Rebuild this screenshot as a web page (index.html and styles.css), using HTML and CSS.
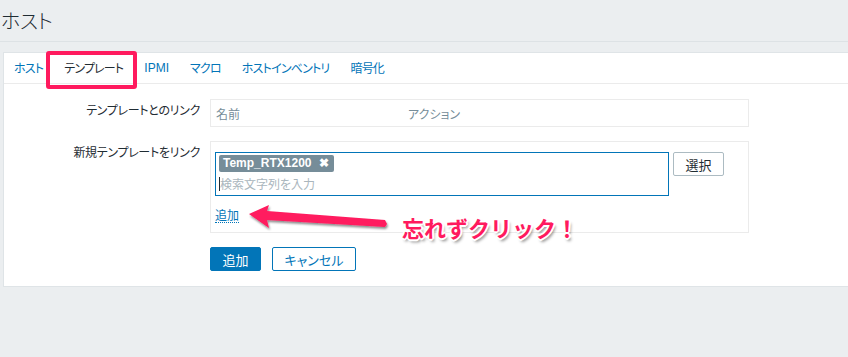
FILE: index.html
```html
<!DOCTYPE html>
<html lang="ja">
<head>
<meta charset="utf-8">
<link rel="stylesheet" href="styles.css">
</head>
<body>
<header class="page-header"><h1 class="title">ホスト</h1></header>
<main class="panel">
  <nav class="tabs">
    <a class="tab">ホスト</a>
    <a class="tab active">テンプレート</a>
    <a class="tab latin">IPMI</a>
    <a class="tab">マクロ</a>
    <a class="tab">ホストインベントリ</a>
    <a class="tab">暗号化</a>
  </nav>
  <div class="form">
    <div class="row">
      <div class="label">テンプレートとのリンク</div>
      <div class="linked">
        <span class="col-name">名前</span>
        <span class="col-action">アクション</span>
      </div>
    </div>
    <div class="row">
      <div class="label">新規テンプレートをリンク</div>
      <div class="newbox">
        <div class="select-line">
          <div class="multiselect">
            <span class="tag">Temp_RTX1200 <span class="tag-x">✖</span></span>
            <div class="search"><span class="caret"></span>検索文字列を入力</div>
          </div>
          <button class="btn-select">選択</button>
        </div>
        <a class="add-link">追加</a>
      </div>
    </div>
    <div class="row">
      <div class="label"></div>
      <div class="actions">
        <button class="btn-primary">追加</button>
        <button class="btn-secondary">キャンセル</button>
      </div>
    </div>
  </div>
</main>
<div class="highlight"></div>
<svg class="arrow" width="848" height="357" viewBox="0 0 848 357">
  <defs>
    <filter id="sh" x="-20%" y="-50%" width="140%" height="200%">
      <feDropShadow dx="1" dy="2" stdDeviation="1.2" flood-color="#000" flood-opacity="0.45"/>
    </filter>
  </defs>
  <polygon filter="url(#sh)" fill="#ff1a5e" points="249,214 269,205 267,211 385,220 387,224 385,227 267,220 269,228"/>
</svg>
<div class="note">忘れずクリック！</div>
</body>
</html>
```
FILE: styles.css
```css
* { box-sizing: border-box; }
html, body { margin: 0; padding: 0; }
body {
  width: 848px;
  height: 357px;
  overflow: hidden;
  background: #ebeef0;
  font-family: "Liberation Sans", "Noto Sans CJK JP", sans-serif;
  font-size: 12px;
  color: #1f2c33;
  position: relative;
  font-feature-settings: "palt";
}
.page-header {
  height: 42px;
  border-bottom: 1px solid #dde2e5;
  padding: 9px 0 0 1px;
}
.title {
  margin: 0;
  font-size: 20px;
  font-weight: 300;
  line-height: 24px;
  color: #1f2c33;
  letter-spacing: -0.5px;
  font-family: "Noto Sans CJK JP", sans-serif;
}
.panel {
  margin: 10px 0 0 3px;
  background: #fff;
  border: 1px solid #dfe4e7;
  border-right: none;
  height: 235px;
}
.tabs {
  display: flex;
  height: 31px;
  border-bottom: 1px solid #ebebeb;
  padding-left: 10px;
  align-items: center;
  gap: 21px;
}
.tab {
  color: #0275b8;
  font-family: "Noto Sans CJK JP", sans-serif;
  font-size: 12px;
  line-height: 16px;
  letter-spacing: -0.8px;
}
.tab.latin { font-family: "Liberation Sans", sans-serif; letter-spacing: 0; }
.tab.active { color: #1f2c33; }
.form { padding-top: 15px; }
.row {
  display: grid;
  grid-template-columns: 196px 539px;
  column-gap: 10px;
  margin-bottom: 14px;
}
.label {
  text-align: right;
  font-family: "Noto Sans CJK JP", sans-serif;
  padding-top: 3px;
  line-height: 16px;
  letter-spacing: -0.3px;
}
.linked {
  height: 28px;
  border: 1px solid #ebebeb;
  display: flex;
  align-items: center;
  padding-left: 5px;
  color: #768d99;
  font-family: "Noto Sans CJK JP", sans-serif;
}
.col-name { width: 192px; }
.newbox {
  height: 92px;
  border: 1px solid #ebebeb;
  padding: 10px 4px 0 4px;
}
.select-line { display: flex; align-items: flex-start; }
.multiselect {
  width: 454px;
  height: 44px;
  border: 1px solid #0275b8;
  padding: 2px 3px;
}
.tag {
  display: inline-block;
  background: #768d99;
  color: #fff;
  font-weight: bold;
  font-size: 12px;
  line-height: 17px;
  height: 17px;
  padding: 0 5px 0 4px;
  border-radius: 2px;
}
.tag-x { font-size: 12px; margin-left: 4px; }
.search {
  margin-top: 3px;
  color: #aab6bd;
  font-family: "Noto Sans CJK JP", sans-serif;
  line-height: 18px;
  display: flex;
  align-items: center;
}
.caret { width: 1px; height: 14px; background: #1f2c33; }
.btn-select {
  margin-left: 4px;
  width: 51px;
  height: 24px;
  background: #fff;
  border: 1px solid #acbbc2;
  border-radius: 2px;
  font-family: "Noto Sans CJK JP", sans-serif;
  font-size: 13px;
  color: #1f2c33;
  padding: 0;
}
.add-link {
  display: inline-block;
  margin-top: 11px;
  color: #0275b8;
  font-family: "Noto Sans CJK JP", sans-serif;
  line-height: 15px;
  border-bottom: 1px dotted #0275b8;
}
.actions { display: flex; gap: 11px; }
.btn-primary, .btn-secondary {
  height: 24px;
  border-radius: 2px;
  font-family: "Noto Sans CJK JP", sans-serif;
  font-size: 13px;
  padding: 0;
  font-feature-settings: "palt";
}
.btn-primary {
  width: 51px;
  background: #0275b8;
  border: 1px solid #0275b8;
  color: #fff;
}
.btn-secondary {
  width: 84px;
  background: #fff;
  border: 1px solid #0275b8;
  color: #0275b8;
}
.highlight {
  position: absolute;
  left: 46px;
  top: 51px;
  width: 91px;
  height: 38px;
  border: 4px solid #ff1a5e;
  border-radius: 3px;
}
.arrow { position: absolute; left: 0; top: 0; pointer-events: none; }
.note {
  position: absolute;
  left: 402px;
  top: 212px;
  font-family: "Noto Sans CJK JP", sans-serif;
  font-weight: bold;
  font-size: 22px;
  line-height: 30px;
  color: #ff1a5e;
  font-feature-settings: normal;
  text-shadow:
    -2px 0 0 #fff, 2px 0 0 #fff, 0 -2px 0 #fff, 0 2px 0 #fff,
    -1px -1px 0 #fff, 1px -1px 0 #fff, -1px 1px 0 #fff, 1px 1px 0 #fff,
    2px 3px 3px rgba(0,0,0,0.45);
}
```
